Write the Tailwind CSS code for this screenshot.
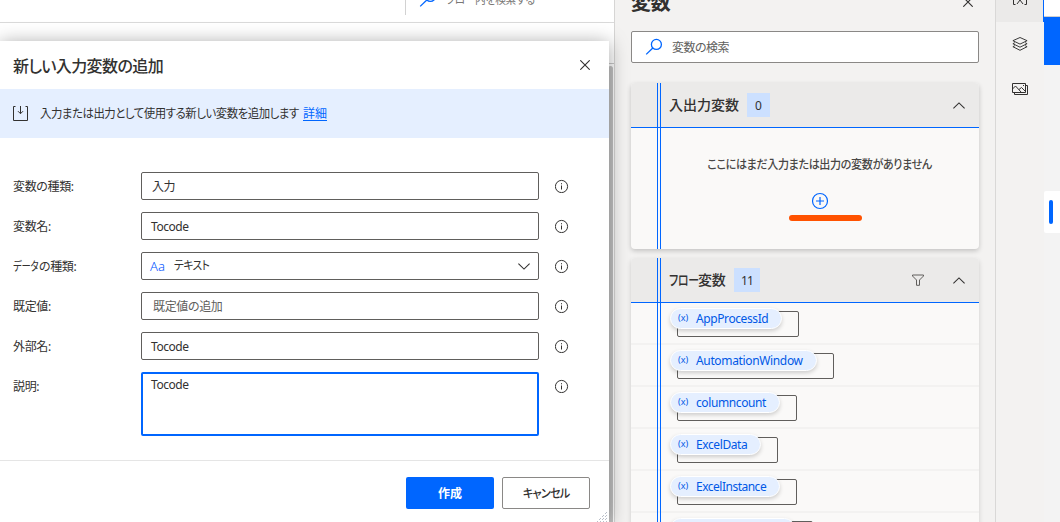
<!DOCTYPE html>
<html lang="ja">
<head>
<meta charset="utf-8">
<title>新しい入力変数の追加</title>
<script src="https://cdn.jsdelivr.net/npm/@tailwindcss/browser@4"></script>
</head>
<body class="relative flex w-[1060px] h-[522px] overflow-hidden bg-white text-[12px] leading-4 text-[#323130] whitespace-nowrap font-['Noto_Sans','Noto_Sans_CJK_JP',sans-serif]">
<svg class="hidden">
  <symbol id="info" viewBox="0 0 14 14"><circle cx="6.500" cy="7.500" r="6.1" fill="none" stroke="currentColor"/><path d="M6.500 6.500v4M6.500 4.200v1.100" stroke="currentColor" fill="none"/></symbol>
  <symbol id="search" viewBox="0 0 18 18"><circle cx="11.4" cy="6.4" r="5" fill="none" stroke="currentColor" stroke-width="1.3"/><path d="M7.8 10 1.2 16.4" stroke="currentColor" stroke-width="1.3"/></symbol>
  <symbol id="close" viewBox="0 0 10 10"><path d="M.3.3l9.4 9.4M9.7.3.3 9.7" stroke="currentColor" stroke-width="1.1"/></symbol>
  <symbol id="up" viewBox="0 0 12 7"><path d="M.4 6.4 6 .9l5.6 5.5" fill="none" stroke="currentColor" stroke-width="1.1"/></symbol>
</svg>

<!-- Flow designer -->
<main class="w-[614px] h-full shrink-0">
  <div class="h-[23px] border-b border-[#dadada] flex items-start pl-[405px] overflow-hidden">
    <div class="w-px h-[15px] bg-[#d2d2d2]"></div>
    <svg class="w-[18px] h-[18px] ml-[13px] -mt-[10px] text-[#0066ff]"><use href="#search"/></svg>
    <span class="ml-[9px] -mt-[8px] text-[#797775] tracking-[-0.4px] [font-feature-settings:'palt'] origin-left scale-x-[0.9]">フロー内を検索する</span>
  </div>
  <div class="h-[41px] border-b border-[#c8c8c8]"></div>
  <div class="ml-auto mt-[2px] mr-px w-[5px] h-[456px] rounded-t bg-[#c4c4c4]"></div>
</main>

<!-- Variables panel -->
<aside class="w-[381px] h-full shrink-0 bg-[#f3f2f1] border-l border-[#d6d5d4] pl-4 pr-4 flex flex-col overflow-hidden">
  <div class="h-[31px] flex items-start justify-between pr-[6px] shrink-0">
    <h2 class="-mt-[11px] text-[20px] leading-[28px] font-bold tracking-[-0.3px]">変数</h2>
    <svg class="w-[10px] h-[10px] -mt-[3px]"><use href="#close"/></svg>
  </div>
  <div class="h-[32px] shrink-0 bg-white border border-[#8a8886] rounded-[2px] flex items-center pl-[13px]">
    <svg class="w-[18px] h-[18px] text-[#0066ff]"><use href="#search"/></svg>
    <span class="ml-[9px] mt-[2px] text-[#605e5c] tracking-[-0.5px] [font-feature-settings:'palt']">変数の検索</span>
  </div>

  <section class="relative mt-5 h-[166px] shrink-0 rounded-[4px] bg-[#faf9f8] shadow-[0_2px_5px_rgba(0,0,0,0.2)] overflow-hidden">
    <div class="h-[45px] bg-[#ebeae9] border-b border-[#0066ff] flex items-center pl-[38px] pr-[14px]">
      <h3 class="text-[14px] font-medium">入出力変数</h3>
      <span class="ml-[8px] w-[23px] h-6 pt-px bg-[#cce0ff] flex items-center justify-center">0</span>
      <svg class="ml-auto w-3 h-[7px]"><use href="#up"/></svg>
    </div>
    <p class="mt-[29px] pl-[29px] text-center text-[#484644] font-medium tracking-[-0.4px] [font-feature-settings:'palt'] origin-[189px_50%] scale-x-[0.922]">ここにはまだ入力または出力の変数がありません</p>
    <svg class="ml-[180px] mt-[19px] w-[18px] h-[18px] text-[#0066ff]" viewBox="0 0 18 18"><circle cx="9" cy="9" r="7.5" fill="none" stroke="currentColor" stroke-width="1.2"/><path d="M9 5v8M5 9h8" stroke="currentColor" stroke-width="1.2"/></svg>
    <div class="ml-[158px] mt-[5px] w-[73px] h-[6px] rounded-full bg-[#ff5200]"></div>
    <div class="absolute left-[26px] top-0 w-[4px] h-full border-x border-[#0066ff]"></div>
  </section>

  <section class="relative mt-[9px] h-[290px] shrink-0 rounded-t-[4px] bg-[#faf9f8] shadow-[0_2px_5px_rgba(0,0,0,0.15)] overflow-hidden">
    <div class="h-[45px] bg-[#ebeae9] border-b border-[#0066ff] flex items-center pl-[38px] pr-[14px]">
      <h3 class="w-[57px] text-[14px] font-medium tracking-[-0.3px] [font-feature-settings:'palt']"><span class="inline-block w-[29px] origin-left scale-x-[0.78]">フロー</span>変数</h3>
      <span class="ml-[8px] w-[26px] h-6 pt-px bg-[#cce0ff] flex items-center justify-center tracking-[-0.8px]">11</span>
      <svg class="ml-auto w-3 h-3 text-[#605e5c]" viewBox="0 0 12 12"><path d="M.5 1h11v1L7.5 6v5.3h-3V6l-4-4z" fill="none" stroke="currentColor"/></svg>
      <svg class="ml-[29px] w-3 h-[7px]"><use href="#up"/></svg>
    </div>
    <div class="[&>div]:h-[42px] [&>div]:border-b-2 [&>div]:border-[#f3f2f1] [&>div]:pt-2 [&>div]:pl-[46px] [&>div>div]:relative [&>div>div]:h-[26px] [&>div>div]:border [&>div>div]:border-[#605e5c] [&>div>div]:rounded-[2px] [&_p]:absolute [&_p]:-left-[8px] [&_p]:-top-[4px] [&_p]:h-[21px] [&_p]:rounded-full [&_p]:bg-[#e5efff] [&_p]:border [&_p]:border-white [&_p]:shadow-[0_2px_4px_rgba(0,0,0,0.18)] [&_p]:flex [&_p]:items-center [&_p]:pl-[7px] [&_p]:text-[#0058e6] [&_i]:not-italic [&_i]:text-[9px] [&_i]:w-[18px] [&_i]:shrink-0 [&_i]:-mt-[2px]">
      <div><div class="w-[122px]"><p class="w-[112px]"><i>(x)</i><span class="mt-px tracking-[-0.4px]">AppProcessId</span></p></div></div>
      <div><div class="w-[157px]"><p class="w-[147px]"><i>(x)</i><span class="mt-px tracking-[-0.35px]">AutomationWindow</span></p></div></div>
      <div><div class="w-[120px]"><p class="w-[110px]"><i>(x)</i><span class="mt-px tracking-[-0.4px]">columncount</span></p></div></div>
      <div><div class="w-[101px]"><p class="w-[91px]"><i>(x)</i><span class="mt-px tracking-[-0.4px]">ExcelData</span></p></div></div>
      <div><div class="w-[120px]"><p class="w-[110px]"><i>(x)</i><span class="mt-px tracking-[-0.5px]">ExcelInstance</span></p></div></div>
      <div><div class="w-[136px]"><p class="w-[125px]"></p></div></div>
    </div>
    <div class="absolute left-[26px] top-0 w-[4px] h-full border-x border-[#0066ff]"></div>
  </section>
</aside>

<!-- Pane switcher -->
<nav class="w-[49px] h-full shrink-0 bg-[#f3f2f1] border-l border-[#d9d8d7] flex flex-col items-center">
  <div class="w-full h-[22px] bg-[#ebeae9] border-r border-[#0066ff] flex justify-center">
    <svg class="w-4 h-[6px]" viewBox="0 0 16 6" fill="none" stroke="#323130"><path d="M1.500 0v4.500h2M14.500 0v4.500h-2M5 4 8 0l3 4"/></svg>
  </div>
  <svg class="mt-[14px] w-4 h-4" viewBox="0 0 16 16" fill="none" stroke="#323130"><path d="M8 1.500.9 4.700 8 8.100l7.100-3.400zM.9 7.700 8 11.200l7.100-3.500M.9 10.700 8 14.300l7.100-3.600M.9 7.700l2-1M15.100 7.700l-2-1M.9 10.700l2-1M15.100 10.700l-2-1" stroke-width=".95"/></svg>
  <svg class="mt-[30px] w-4 h-[13px]" viewBox="0 0 16 13" fill="none" stroke="#323130"><path d="M.5 1.500h13v9H.5zM2.500 10.500v2h13v-9h-2M.5 7 3.500 4l5.500 6M7 7.500 9.500 5.500l4 4M11 3.500h1"/></svg>
</nav>

<!-- Neighbouring window edge -->
<div class="w-4 h-full shrink-0 bg-[#f3f3f3] flex flex-col">
  <div class="h-[17px] bg-white border-b border-[#d0d0d0]"></div>
  <div class="h-[48px] bg-[#0066ff]"></div>
  <div class="mt-[126px] h-[42px] rounded-l-[2px] bg-white flex items-center pl-[5px]"><div class="w-1 h-6 rounded-full bg-[#0066ff]"></div></div>
</div>

<!-- Dialog -->
<div class="absolute left-0 top-[41px] w-[609px] h-[481px] bg-white shadow-[0_2px_18px_rgba(0,0,0,0.36)] flex flex-col">
  <div class="h-[48px] shrink-0 flex items-center justify-between pl-[13px] pr-[19px]">
    <h1 class="mt-[2px] text-[16px] leading-6 font-medium tracking-[-0.6px] [font-feature-settings:'palt']">新しい入力変数の追加</h1>
    <svg class="w-[10px] h-[10px]"><use href="#close"/></svg>
  </div>
  <div class="h-[49px] shrink-0 bg-[#e5efff] flex items-center pl-[13px]">
    <svg class="w-[15px] h-[15px]" viewBox="0 0 15 15" fill="none" stroke="#323130"><path d="M2.500.5h-2v14h14V.5h-2M7.500 0v7.500M5 5.200l2.500 2.500L10 5.200"/></svg>
    <span class="ml-[12px] mt-px w-[259px] tracking-[-0.5px] [font-feature-settings:'palt'] origin-left scale-x-[0.953]">入力または出力として使用する新しい変数を追加します</span>
    <a class="ml-[4px] mt-px text-[#0066ff] underline underline-offset-2">詳細</a>
  </div>
  <div class="mt-[34px] pl-[13px] flex flex-col gap-3 [&>div]:flex [&_label]:w-[128px] [&_label]:h-7 [&_label]:pt-[2px] [&_label]:flex [&_label]:items-center [&_label]:tracking-[-0.35px] [&_label]:[font-feature-settings:'palt'] [&>div>p]:w-[398px] [&>div>p]:h-7 [&>div>p]:pt-[2px] [&>div>p]:border [&>div>p]:border-[#605e5c] [&>div>p]:rounded-[2px] [&>div>p]:flex [&>div>p]:items-center [&>div>p]:pl-[9px] [&>div>svg]:w-[14px] [&>div>svg]:h-[14px] [&>div>svg]:ml-[16px] [&>div>svg]:mt-[7px]">
    <div><label>変数の種類:</label><p class="tracking-[-0.5px]"><span class="ml-px">入力</span></p><svg><use href="#info"/></svg></div>
    <div><label>変数名:</label><p class="tracking-[-0.45px]">Tocode</p><svg><use href="#info"/></svg></div>
    <div><label><span class="inline-block w-[26px] origin-left scale-x-[0.78]">データ</span>の種類:</label><p><span class="w-[24px] -ml-px -mt-[3px] text-[#0055ff] text-[13px] font-light">Aa</span><span class="-mt-[2px] tracking-[-0.6px] [font-feature-settings:'palt'] origin-left scale-x-[0.9]">テキスト</span><svg class="ml-auto mr-[8px] -mt-[2px] w-3 h-[7px] rotate-180"><use href="#up"/></svg></p><svg><use href="#info"/></svg></div>
    <div><label>既定値:</label><p class="text-[#605e5c] tracking-[-0.35px] [font-feature-settings:'palt']"><span class="ml-[2px]">既定値の追加</span></p><svg><use href="#info"/></svg></div>
    <div><label>外部名:</label><p class="tracking-[-0.45px]">Tocode</p><svg><use href="#info"/></svg></div>
    <div><label>説明:</label><div class="w-[398px] h-16 border-2 border-[#0066ff] rounded-[2px] pl-[8px] pt-[3px] tracking-[-0.45px]">Tocode</div><svg><use href="#info"/></svg></div>
  </div>
  <div class="mt-6 h-[62px] border-t border-[#e5e5e5] pt-4 pr-[19px] flex justify-end gap-2">
    <button class="w-[88px] h-8 pt-[2px] rounded-[2px] bg-[#0066ff] text-white font-bold">作成</button>
    <button class="w-[88px] h-8 pt-[2px] rounded-[2px] border border-[#8a8886] font-medium tracking-[-0.8px] [font-feature-settings:'palt']"><span class="inline-block scale-x-[0.93]">キャンセル</span></button>
  </div>
  <svg class="absolute right-[2px] bottom-0 w-[10px] h-[10px]" viewBox="0 0 10 10" fill="#b8bec8"><path d="M9 0h1v1H9zM6 3h1v1H6zM9 3h1v1H9zM3 6h1v1H3zM6 6h1v1H6zM9 6h1v1H9zM0 9h1v1H0zM3 9h1v1H3zM6 9h1v1H6zM9 9h1v1H9zM8 1h1v1H8zM5 4h1v1H5zM8 4h1v1H8zM2 7h1v1H2zM5 7h1v1H5zM8 7h1v1H8z"/></svg>
</div>
</body>
</html>
